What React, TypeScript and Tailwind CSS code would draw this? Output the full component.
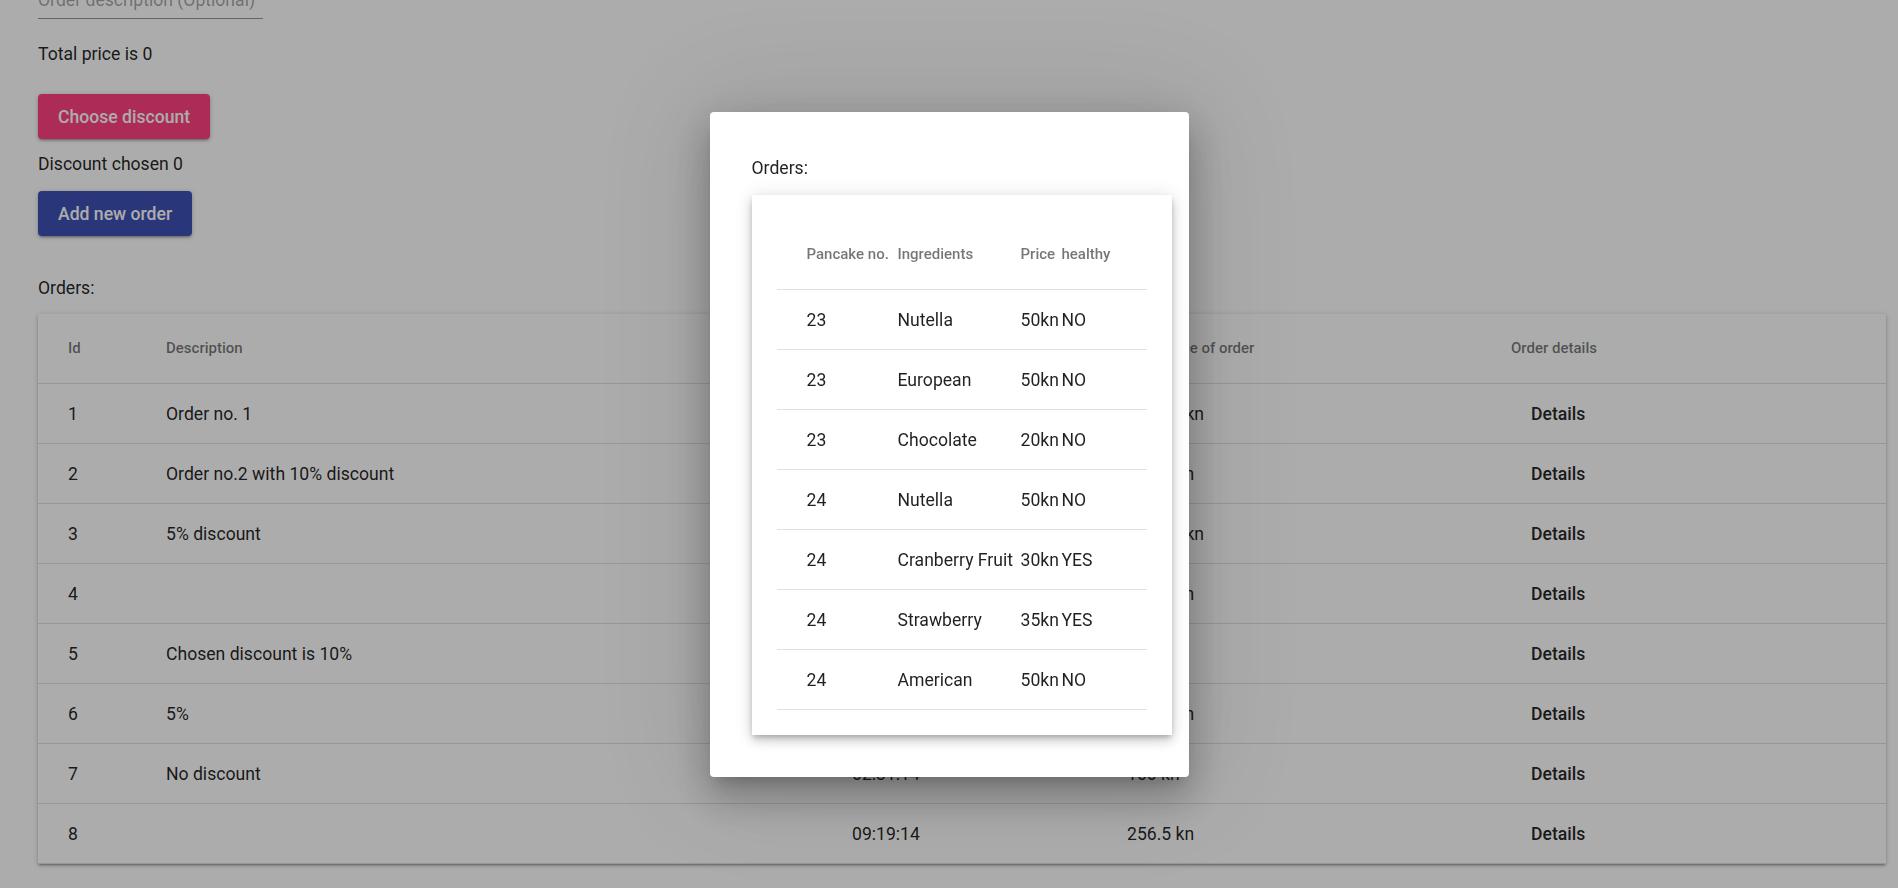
import React from "react"

type Order = {
    id: number,
    description: string,
    time: string,
    price: string
}

type Pancake = {
    no: number,
    ingredient: string,
    price: string,
    healthy: string
}

const orders: Order[] = [
    {id: 1, description: "Order no. 1", time: "11:02:37", price: "1020.5 kn"},
    {id: 2, description: "Order no.2 with 10% discount", time: "11:45:09", price: "312.3 kn"},
    {id: 3, description: "5% discount", time: "12:10:52", price: "1180.5 kn"},
    {id: 4, description: "", time: "12:58:21", price: "205.5 kn"},
    {id: 5, description: "Chosen discount is 10%", time: "01:14:46", price: "90 kn"},
    {id: 6, description: "5%", time: "01:59:03", price: "142.5 kn"},
    {id: 7, description: "No discount", time: "02:31:14", price: "100 kn"},
    {id: 8, description: "", time: "09:19:14", price: "256.5 kn"},
]

const pancakes: Pancake[] = [
    {no: 23, ingredient: "Nutella", price: "50kn", healthy: "NO"},
    {no: 23, ingredient: "European", price: "50kn", healthy: "NO"},
    {no: 23, ingredient: "Chocolate", price: "20kn", healthy: "NO"},
    {no: 24, ingredient: "Nutella", price: "50kn", healthy: "NO"},
    {no: 24, ingredient: "Cranberry Fruit", price: "30kn", healthy: "YES"},
    {no: 24, ingredient: "Strawberry", price: "35kn", healthy: "YES"},
    {no: 24, ingredient: "American", price: "50kn", healthy: "NO"},
]

// grid template for the big orders table, columns start where the text starts in the screenshot
const ordersCols = "grid grid-cols-[98px_686px_275px_384px_1fr] items-center"
const pancakeCols = "grid grid-cols-[121px_123px_41px_85px] items-center"

function OrdersTable() {
    return (
        <div className="w-full bg-white shadow-[0_1px_5px_0_rgba(0,0,0,0.2),0_2px_2px_0_rgba(0,0,0,0.14),0_3px_1px_-2px_rgba(0,0,0,0.12)]">
            <div className={`${ordersCols} h-[70px] border-b border-[#e0e0e0] text-[15px] font-medium text-black/[0.54]`}>
                <div className="pl-[30px]">Id</div>
                <div className="pl-[30px]">Description</div>
                <div className="pl-[30px]">Time of order</div>
                <div className="pl-[30px]">Total price of order</div>
                <div className="pl-[30px]">Order details</div>
            </div>
            {orders.map(order =>
                <div key={order.id} className={`${ordersCols} h-[60px] pt-[2px] border-b border-[#e0e0e0] text-[17.6px]`}>
                    <div className="pl-[30px]">{order.id}</div>
                    <div className="pl-[30px]">{order.description}</div>
                    <div className="pl-[30px]">{order.time}</div>
                    <div className="pl-[30px]">{order.price}</div>
                    <div className="pl-[50px] font-medium">Details</div>
                </div>
            )}
        </div>
    )
}

function PancakeDialog() {
    return (
        <div className="w-[479px] h-[665px] bg-white rounded-[4px] pl-[42px] pt-[44px] shadow-[0px_11px_15px_-7px_rgba(0,0,0,0.2),0px_24px_38px_3px_rgba(0,0,0,0.14),0px_9px_46px_8px_rgba(0,0,0,0.12),0_0_120px_30px_rgba(0,0,0,0.08)]">
            <div className="leading-[24px] text-[17.6px]">Orders:</div>
            <div className="mt-[15px] w-[420px] bg-white px-[25px] pt-[25px] pb-[25px] shadow-[0_3px_5px_-1px_rgba(0,0,0,0.2),0_6px_10px_0_rgba(0,0,0,0.14),0_1px_18px_0_rgba(0,0,0,0.12)]">
                <div className={`${pancakeCols} h-[70px] border-b border-[#e0e0e0] text-[15px] font-medium text-black/[0.54]`}>
                    <div className="pl-[30px] whitespace-nowrap">Pancake no.</div>
                    <div>Ingredients</div>
                    <div>Price</div>
                    <div>healthy</div>
                </div>
                {pancakes.map((p, i) =>
                    <div key={i} className={`${pancakeCols} h-[60px] pt-[2px] border-b border-[#e0e0e0] text-[17.6px]`}>
                        <div className="pl-[30px]">{p.no}</div>
                        <div className="whitespace-nowrap">{p.ingredient}</div>
                        <div>{p.price}</div>
                        <div>{p.healthy}</div>
                    </div>
                )}
            </div>
        </div>
    )
}

export default function App() {
    return (
        <div className="relative h-[888px] overflow-hidden bg-white font-['Roboto',sans-serif] text-black/[0.87]">
            <div className="pl-[38px] pr-[12px]">
                {/* description input, scrolled partly out of view */}
                <div className="-mt-[10px] w-[225px] pb-[7px] border-b border-black/[0.42] leading-[21px] text-[17.6px] text-black/[0.37]">
                    Order description (Optional)
                </div>

                <div className="mt-[23px] leading-[24px] text-[17.6px]">Total price is 0</div>

                <button className="mt-[28px] h-[45px] px-[20px] pt-[2px] rounded-[4px] bg-[#ff4081] text-white text-[17.6px] font-medium shadow-[0_1px_5px_0_rgba(0,0,0,0.2),0_2px_2px_0_rgba(0,0,0,0.14),0_3px_1px_-2px_rgba(0,0,0,0.12)]">
                    Choose discount
                </button>

                <div className="mt-[13px] leading-[24px] text-[17.6px]">Discount chosen 0</div>

                <button className="mt-[15px] h-[45px] px-[20px] pt-[2px] rounded-[4px] bg-[#3f51b5] text-white text-[17.6px] font-medium shadow-[0_1px_5px_0_rgba(0,0,0,0.2),0_2px_2px_0_rgba(0,0,0,0.14),0_3px_1px_-2px_rgba(0,0,0,0.12)]">
                    Add new order
                </button>

                <div className="mt-[40px] leading-[24px] text-[17.6px]">Orders:</div>

                <div className="mt-[14px]">
                    <OrdersTable />
                </div>
            </div>

            {/* dialog backdrop */}
            <div className="fixed inset-0 bg-black/[0.325] flex items-center justify-center">
                <PancakeDialog />
            </div>
        </div>
    )
}
